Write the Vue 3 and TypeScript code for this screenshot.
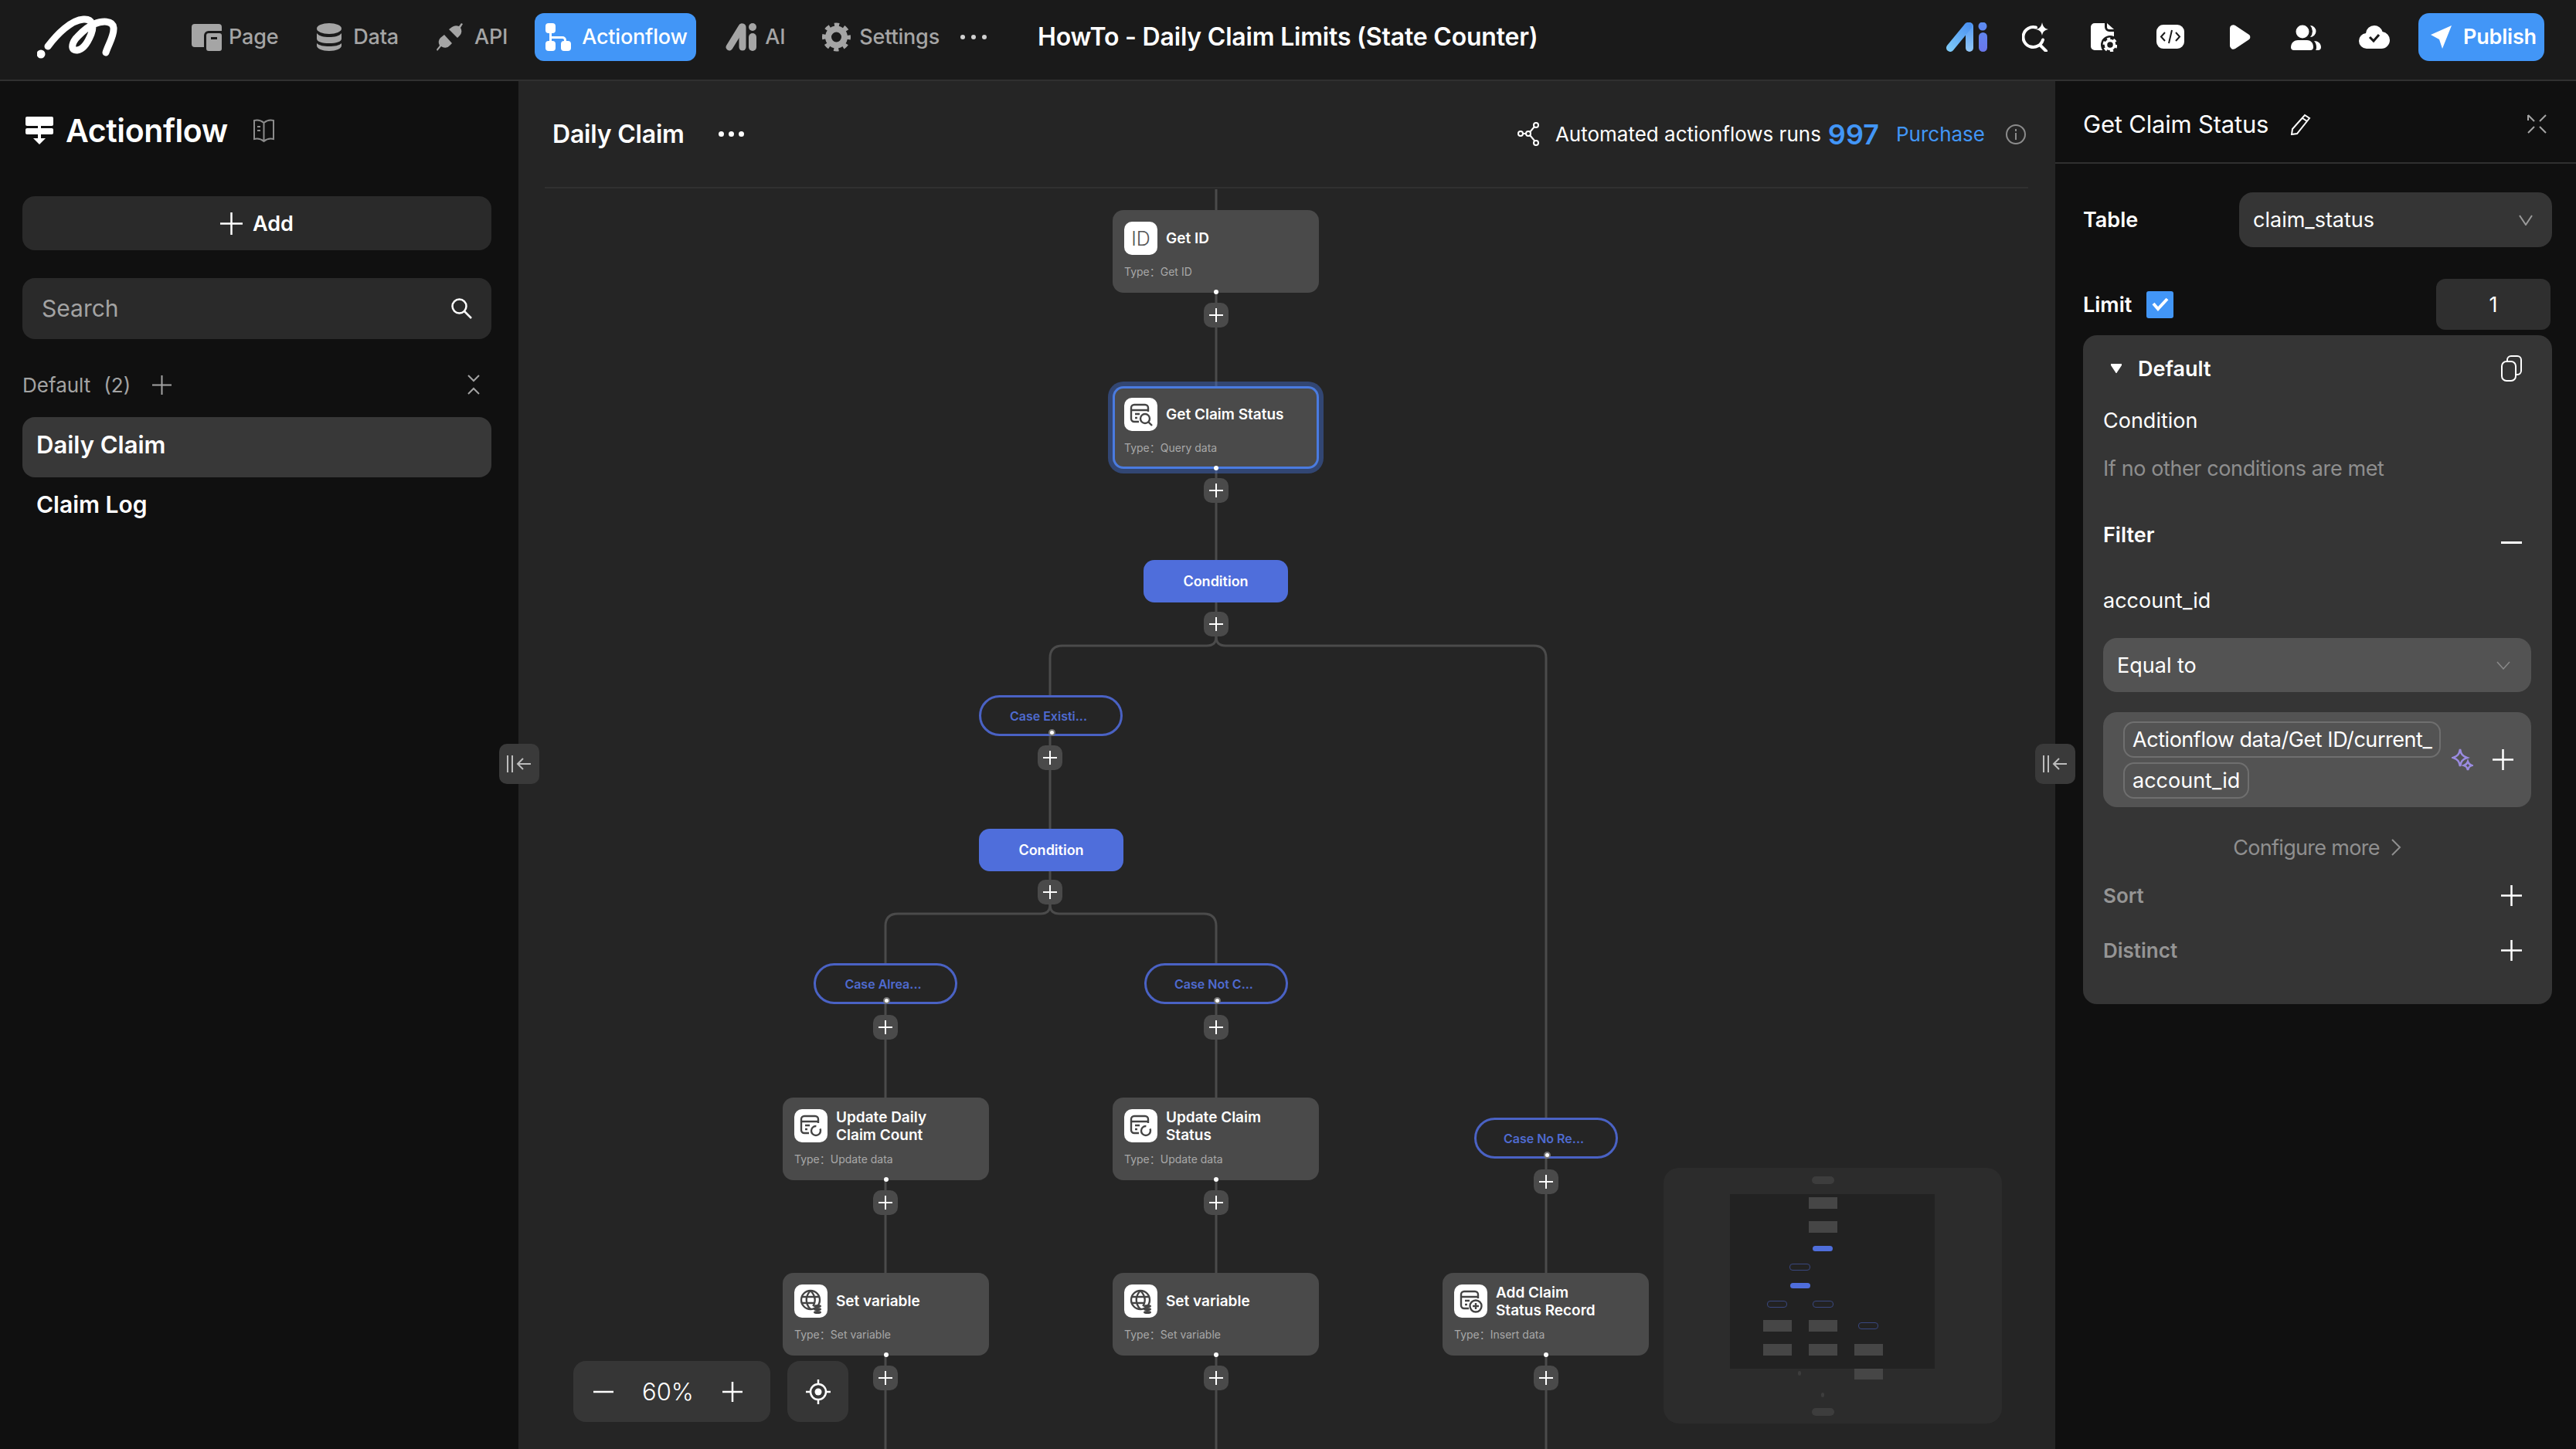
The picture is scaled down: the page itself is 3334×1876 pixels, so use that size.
<script setup lang="ts">
type IconKind = 'id' | 'query' | 'update' | 'globe' | 'add'

interface FlowNode {
  title: string[]
  type: string
  x: number
  y: number
  icon: IconKind
  active?: boolean
}

interface Box {
  x: number
  y: number
  w: number
  h: number
  kind?: string
}

// canvas origin in page pixels, nodes below are written in page pixels
const ox = 671
const oy = 105

const at = (x: number, y: number) => ({ left: `${x - ox}px`, top: `${y - oy}px` })
const box = (b: Box) => ({ ...at(b.x, b.y), width: `${b.w}px`, height: `${b.h}px` })

const nodes: FlowNode[] = [
  { title: ['Get ID'], type: 'Get ID', x: 1440, y: 272, icon: 'id' },
  { title: ['Get Claim Status'], type: 'Query data', x: 1440, y: 500, icon: 'query', active: true },
  { title: ['Update Daily', 'Claim Count'], type: 'Update data', x: 1013, y: 1421, icon: 'update' },
  { title: ['Update Claim', 'Status'], type: 'Update data', x: 1440, y: 1421, icon: 'update' },
  { title: ['Set variable'], type: 'Set variable', x: 1013, y: 1648, icon: 'globe' },
  { title: ['Set variable'], type: 'Set variable', x: 1440, y: 1648, icon: 'globe' },
  { title: ['Add Claim', 'Status Record'], type: 'Insert data', x: 1867, y: 1648, icon: 'add' }
]

const conditions = [
  { x: 1480, y: 725 },
  { x: 1267, y: 1073 }
]

const cases = [
  { label: 'Case Existi...', x: 1267, y: 900 },
  { label: 'Case Alrea...', x: 1053, y: 1247 },
  { label: 'Case Not C...', x: 1481, y: 1247 },
  { label: 'Case No Re...', x: 1908, y: 1447 }
]

const plusButtons = [
  { x: 1574, y: 408 },
  { x: 1574, y: 635 },
  { x: 1574, y: 808 },
  { x: 1359, y: 981 },
  { x: 1359, y: 1155 },
  { x: 1146, y: 1330 },
  { x: 1574, y: 1330 },
  { x: 2001, y: 1530 },
  { x: 1146, y: 1557 },
  { x: 1574, y: 1557 },
  { x: 1146, y: 1784 },
  { x: 1574, y: 1784 },
  { x: 2001, y: 1784 }
]

const miniBoxes: Box[] = [
  { x: 2345, y: 1523, w: 29, h: 10, kind: 'pill' },
  { x: 2341, y: 1550, w: 37, h: 15, kind: 'gray' },
  { x: 2341, y: 1581, w: 37, h: 15, kind: 'gray' },
  { x: 2346, y: 1613, w: 26, h: 7, kind: 'blue' },
  { x: 2316, y: 1636, w: 27, h: 9, kind: 'line' },
  { x: 2317, y: 1661, w: 26, h: 7, kind: 'blue' },
  { x: 2287, y: 1684, w: 26, h: 9, kind: 'line' },
  { x: 2346, y: 1684, w: 27, h: 9, kind: 'line' },
  { x: 2282, y: 1709, w: 37, h: 15, kind: 'gray' },
  { x: 2341, y: 1709, w: 37, h: 15, kind: 'gray' },
  { x: 2405, y: 1712, w: 26, h: 9, kind: 'line' },
  { x: 2282, y: 1740, w: 37, h: 15, kind: 'gray' },
  { x: 2341, y: 1740, w: 37, h: 15, kind: 'gray' },
  { x: 2400, y: 1740, w: 37, h: 15, kind: 'gray' },
  { x: 2400, y: 1772, w: 37, h: 14, kind: 'gray' },
  { x: 2327, y: 1775, w: 4, h: 6, kind: 'pill' },
  { x: 2357, y: 1803, w: 4, h: 6, kind: 'pill' },
  { x: 2345, y: 1823, w: 29, h: 10, kind: 'pill' }
]

const linesPath = [
  'M1574 245V824Q1574 836 1562 836H1375Q1359 836 1359 852V1171Q1359 1183 1347 1183H1162Q1146 1183 1146 1199V1876',
  'M1574 824Q1574 836 1586 836H1985Q2001 836 2001 852V1876',
  'M1359 1171Q1359 1183 1371 1183H1558Q1574 1183 1574 1199V1876'
]
</script>

<template>
  <div class="app">
    <header class="topbar">
      <svg class="logo" viewBox="0 0 104 56" fill="none" stroke="#fff" stroke-width="9" stroke-linecap="round" stroke-linejoin="round">
        <path d="M14 40C26 24 44 6 60 5C72 4 74 14 70 24C66 34 60 44 52 45C44 46 44 38 50 30C56 24 62 16 74 11C84 7 98 6 99 16C100 26 92 38 89 48" />
        <circle cx="5" cy="50" r="5.500" fill="#fff" stroke="none" />
      </svg>

      <nav class="nav">
        <a class="nav-item nav-page">
          <svg width="39" height="36" viewBox="0 0 39 36" fill="#a5a5a5"><path d="M4 1h31a4 4 0 0 1 4 4v5H22a6 6 0 0 0-6 6v15H4a4 4 0 0 1-4-4V5a4 4 0 0 1 4-4z" /><rect x="19" y="13" width="20" height="23" rx="3" /><rect x="25" y="18" width="8" height="3" fill="#1a1a1a" /></svg>
          <span>Page</span>
        </a>
        <a class="nav-item nav-data">
          <svg width="34" height="36" viewBox="0 0 34 36" fill="#a5a5a5"><ellipse cx="17" cy="7" rx="16" ry="7" /><path d="M1 13c3 4 9 5 16 5s13-1 16-5v7c0 4-7 6-16 6S1 24 1 20z" /><path d="M1 26c3 3 9 4 16 4s13-1 16-4v3c0 4-7 7-16 7S1 33 1 29z" /></svg>
          <span>Data</span>
        </a>
        <a class="nav-item nav-api">
          <svg width="34" height="36" viewBox="0 0 34 36" fill="#a5a5a5"><path d="M20 5a9 9 0 0 1 9-1l3-4 2 1-3 5a8 8 0 0 1-1 10l-3 3-11-11z" /><path d="M10 15l10 11-3 3a8 8 0 0 1-11 1l-5 6-1-2 4-5a8 8 0 0 1 1-10z" /></svg>
          <span>API</span>
        </a>
        <a class="nav-item nav-active">
          <svg width="33" height="36" viewBox="0 0 33 36" fill="#fff"><rect x="0" y="0" width="13" height="13" rx="4" /><rect x="0" y="23" width="13" height="13" rx="4" /><rect x="20" y="23" width="13" height="13" rx="4" /><path d="M5 12h3v5h14a5 5 0 0 1 5 5v2h-3v-2a2 2 0 0 0-2-2H8v4H5z" /></svg>
          <span>Actionflow</span>
        </a>
        <a class="nav-item nav-ai">
          <svg width="40" height="36" viewBox="0 0 40 36" fill="none" stroke="#a5a5a5"><path d="M5 31L21 5" stroke-width="9" stroke-linecap="round" /><path d="M22 5v26" stroke-width="9" stroke-linecap="round" /><circle cx="35" cy="5" r="5" fill="#a5a5a5" stroke="none" /><rect x="30" y="13" width="10" height="23" rx="5" fill="#a5a5a5" stroke="none" /></svg>
          <span>AI</span>
        </a>
        <a class="nav-item nav-settings">
          <svg width="37" height="38" viewBox="0 0 37 38" fill="none" stroke="#a5a5a5"><circle cx="18.500" cy="19" r="10.500" stroke-width="8" /><circle cx="18.500" cy="19" r="15.500" stroke-width="6" stroke-dasharray="6.100 6.070" stroke-dashoffset="3" /></svg>
          <span>Settings</span>
        </a>
        <span class="nav-dots"><i></i><i></i><i></i></span>
      </nav>

      <h1 class="project">HowTo - Daily Claim Limits (State Counter)</h1>

      <div class="top-actions">
        <svg width="54" height="38" viewBox="0 0 54 38" fill="none">
          <defs>
            <linearGradient id="aiSlant" gradientUnits="userSpaceOnUse" x1="4" y1="36" x2="32" y2="2"><stop offset="0" stop-color="#7fcbf8" /><stop offset="1" stop-color="#4a90f2" /></linearGradient>
            <linearGradient id="aiStem" gradientUnits="userSpaceOnUse" x1="31" y1="38" x2="31" y2="0"><stop offset="0" stop-color="#93c8f8" /><stop offset="1" stop-color="#4f97f4" /></linearGradient>
            <linearGradient id="aiDot" gradientUnits="userSpaceOnUse" x1="48" y1="38" x2="48" y2="0"><stop offset="0" stop-color="#6a76ea" /><stop offset="1" stop-color="#5c8cf0" /></linearGradient>
          </defs>
          <path d="M31 33V5" stroke="url(#aiStem)" stroke-width="10" stroke-linecap="round" />
          <path d="M6 33L29 5" stroke="url(#aiSlant)" stroke-width="10" stroke-linecap="round" />
          <circle cx="48" cy="5" r="5.500" fill="url(#aiDot)" />
          <rect x="43" y="13" width="11" height="25" rx="5.500" fill="url(#aiDot)" />
        </svg>
        <svg width="35" height="38" viewBox="0 0 35 38" fill="none" stroke="#fff" stroke-width="4" stroke-linecap="round"><path d="M18 6.500a13 13 0 1 0 9 16" /><path d="M24 30l7 7" /><path d="M26 0c1 5 3 8 8 9-5 1-7 3-8 8-1-5-3-7-8-8 5-1 7-4 8-9z" fill="#fff" stroke="none" /></svg>
        <svg width="35" height="38" viewBox="0 0 35 38" fill="#fff"><path d="M6 1h13v5a6 6 0 0 0 6 6h6v24H6a5 5 0 0 1-5-5V6a5 5 0 0 1 5-5z" /><path d="M22 1l9 8h-6a3 3 0 0 1-3-3z" /><circle cx="26" cy="29" r="12" fill="#1a1a1a" /><circle cx="26" cy="29" r="5.500" fill="none" stroke="#fff" stroke-width="3.500" /><circle cx="26" cy="29" r="8" fill="none" stroke="#fff" stroke-width="3" stroke-dasharray="4.200 4.180" /></svg>
        <svg width="36" height="32" viewBox="0 0 36 32"><rect width="36" height="31" rx="9" fill="#fff" /><path d="M11 10l-5 5.500 5 5.500M25 10l5 5.500-5 5.500M20 7l-4 17" fill="none" stroke="#1a1a1a" stroke-width="2" /></svg>
        <svg width="29" height="32" viewBox="0 0 29 32" fill="#fff"><path d="M1 5a4.500 4.500 0 0 1 7-4l18 12a4 4 0 0 1 0 6L8 31a4.500 4.500 0 0 1-7-4z" /></svg>
        <svg width="39" height="36" viewBox="0 0 39 36" fill="#fff"><circle cx="15" cy="11" r="8.500" /><path d="M0 31c0-6 5-9 9-9h12c4 0 8 3 8 9a4 4 0 0 1-4 4H4a4 4 0 0 1-4-4z" /><path d="M25 3a7 7 0 0 1 0 15 11 11 0 0 0 0-15zM30 23c5 0 9 3 9 8a4 4 0 0 1-4 4h-3c1-1 1-3 1-4 0-3-1-6-3-8z" /></svg>
        <svg width="40" height="32" viewBox="0 0 40 32"><path d="M20 1a11 11 0 0 1 10.500 8A11 11 0 0 1 40 20a11 11 0 0 1-11 11H10A10 10 0 0 1 0 21a10 10 0 0 1 9-10A11 11 0 0 1 20 1z" fill="#fff" /><path d="M14 16l5 5 7-8" fill="none" stroke="#1a1a1a" stroke-width="3" /></svg>
        <button class="publish">
          <svg width="27" height="30" viewBox="0 0 27 30" fill="#fff"><path d="M27 0L15 30l-4-12-11-6z" /></svg>
          Publish
        </button>
      </div>
    </header>

    <div class="body">
      <aside class="sidebar">
        <div class="side-title">
          <svg class="side-icon" width="36" height="36" viewBox="0 0 36 36" fill="#fff"><rect width="36" height="12" rx="2" /><rect y="15" width="36" height="8" rx="2" /><path d="M16 12h4v4h-4zM16 23h4v5h6l-8 8-8-8h6z" /></svg>
          <h2>Actionflow</h2>
          <svg class="book" width="27" height="31" viewBox="0 0 27 31" fill="none" stroke="#8c8c8c" stroke-width="2"><path d="M13.500 5C10 2 5 1 1 2v24c4-1 9 0 12.500 3 3.500-3 8.500-4 12.500-3V2c-4-1-9 0-12.500 3zM13.500 5v24M5 10h4M5 15h4" /></svg>
        </div>
        <button class="side-add">
          <svg width="29" height="29" viewBox="0 0 29 29" stroke="#fff" stroke-width="2.500"><path d="M14.500 0v29M0 14.500h29" /></svg>
          Add
        </button>
        <div class="side-search">
          <span>Search</span>
          <svg width="28" height="28" viewBox="0 0 28 28" fill="none" stroke="#fff" stroke-width="2.500"><circle cx="11.500" cy="11.500" r="9" /><path d="M18 18l9 9" /></svg>
        </div>
        <div class="side-group">
          <span>Default</span>
          <span class="group-count">(2)</span>
          <svg class="group-plus" width="25" height="25" viewBox="0 0 25 25" stroke="#a3a3a3" stroke-width="2"><path d="M12.500 0v25M0 12.500h25" /></svg>
          <svg class="group-collapse" width="16" height="26" viewBox="0 0 16 26" fill="none" stroke="#a3a3a3" stroke-width="2"><path d="M1 1l7 7 7-7M1 25l7-7 7 7" /></svg>
        </div>
        <div class="side-row side-row-active">Daily Claim</div>
        <div class="side-row">Claim Log</div>
      </aside>

      <main class="canvas">
        <div class="canvas-head">
          <span class="flow-name">Daily Claim</span>
          <span class="flow-dots"><i></i><i></i><i></i></span>
          <svg class="share" width="29" height="31" viewBox="0 0 29 31" fill="none" stroke="#fff" stroke-width="2"><circle cx="4" cy="15" r="3" /><circle cx="24" cy="4" r="3" /><circle cx="24" cy="27" r="3" /><circle cx="14" cy="15" r="3" /><path d="M7 15h4M16 13l6-7M16 17l6 7" /></svg>
          <span class="runs">Automated actionflows runs</span>
          <span class="runs-num">997</span>
          <span class="purchase">Purchase</span>
          <svg width="26" height="26" viewBox="0 0 26 26" fill="none" stroke="#8c8c8c" stroke-width="2"><circle cx="13" cy="13" r="12" /><path d="M13 11v9M13 6v3" /></svg>
        </div>

        <svg class="lines" width="1989" height="1771" :viewBox="`${ox} ${oy} 1989 1771`" fill="none" stroke="#4b4b4b" stroke-width="3">
          <path v-for="d in linesPath" :key="d" :d="d" />
        </svg>

        <div
          v-for="n in nodes"
          :key="n.title.join() + n.x"
          class="node"
          :class="{ 'node-active': n.active }"
          :style="at(n.x, n.y)"
        >
          <div class="node-top">
            <div class="node-icon">
              <span v-if="n.icon === 'id'" class="id-glyph">ID</span>
              <svg v-else width="32" height="32" viewBox="0 0 32 32" fill="none" stroke="#444" stroke-width="2.400">
                <template v-if="n.icon === 'globe'">
                  <circle cx="15" cy="14" r="12" />
                  <path d="M3 10h24M3 18h18M15 2c-7 7-7 17 0 24M15 2c7 7 7 15 3 20" />
                  <ellipse cx="24" cy="22" rx="5" ry="2" fill="#444" stroke="none" />
                  <ellipse cx="24" cy="26" rx="5" ry="2" fill="#444" stroke="none" />
                  <ellipse cx="24" cy="30" rx="5" ry="2" fill="#444" stroke="none" />
                </template>
                <template v-else>
                  <path d="M13 25H7a4 4 0 0 1-4-4V7a4 4 0 0 1 4-4h14a4 4 0 0 1 4 4v5" />
                  <path d="M3 10h22M8 15h6M8 20h3" />
                  <template v-if="n.icon === 'query'">
                    <circle cx="21" cy="21" r="6" />
                    <path d="M25 25l5 5" />
                  </template>
                  <template v-else-if="n.icon === 'update'">
                    <circle cx="22" cy="22" r="6" stroke-dasharray="28 6" />
                  </template>
                  <template v-else>
                    <circle cx="22" cy="22" r="7.500" />
                    <path d="M22 18v8M18 22h8" />
                  </template>
                </template>
              </svg>
            </div>
            <div class="node-title">
              <div v-for="line in n.title" :key="line">{{ line }}</div>
            </div>
          </div>
          <div class="node-type">Type：{{ n.type }}</div>
          <i class="node-dot"></i>
        </div>

        <div v-for="c in conditions" :key="c.y" class="cond" :style="at(c.x, c.y)">Condition</div>

        <div v-for="c in cases" :key="c.label" class="case" :style="at(c.x, c.y)">
          {{ c.label }}
          <i class="case-dot"></i>
        </div>

        <div v-for="p in plusButtons" :key="`${p.x}-${p.y}`" class="plus" :style="at(p.x - 16, p.y - 16)">
          <svg width="18" height="18" viewBox="0 0 18 18" stroke="#fff" stroke-width="2"><path d="M9 0v18M0 9h18" /></svg>
        </div>

        <div class="zoom-tools">
          <div class="zoom-box">
            <svg width="26" height="26" viewBox="0 0 26 26" stroke="#fff" stroke-width="2.500"><path d="M0 13h26" /></svg>
            <span>60%</span>
            <svg width="26" height="26" viewBox="0 0 26 26" stroke="#fff" stroke-width="2.500"><path d="M13 0v26M0 13h26" /></svg>
          </div>
          <div class="zoom-target">
            <svg width="32" height="32" viewBox="0 0 32 32" fill="none" stroke="#fff" stroke-width="2.500"><circle cx="16" cy="16" r="10" /><circle cx="16" cy="16" r="4.500" fill="#fff" stroke="none" /><path d="M16 0v6M16 26v6M0 16h6M26 16h6" /></svg>
          </div>
        </div>

        <div class="minimap">
          <div class="mini-view"></div>
        </div>
        <div v-for="(b, i) in miniBoxes" :key="i" class="mini-box" :class="`mini-${b.kind}`" :style="box(b)"></div>
      </main>

      <aside class="panel">
        <div class="panel-head">
          <span>Get Claim Status</span>
          <svg class="pencil" width="27" height="28" viewBox="0 0 27 28" fill="none" stroke="#fff" stroke-width="2"><path d="M19 2l6 4L9 26l-7 1 1-7zM16 6l6 4" /></svg>
          <svg class="expand" width="25" height="25" viewBox="0 0 25 25" fill="none" stroke="#a5a5a5" stroke-width="2"><path d="M1 8V1M1 1l8 8M24 1l-8 8M1 24l8-8M24 24l-8-8" /></svg>
        </div>

        <div class="panel-body">
          <div class="table-row">
            <span class="label">Table</span>
            <div class="select table-select">
              <span>claim_status</span>
              <svg width="18" height="14" viewBox="0 0 18 14" fill="none" stroke="#9a9a9a" stroke-width="2"><path d="M1 1l8 12 8-12" /></svg>
            </div>
          </div>

          <div class="limit-row">
            <span class="label">Limit</span>
            <span class="checkbox">
              <svg width="24" height="20" viewBox="0 0 24 20" fill="none" stroke="#fff" stroke-width="4"><path d="M3 9l6 7L21 3" /></svg>
            </span>
            <div class="limit-input">1</div>
          </div>

          <section class="cond-card">
            <div class="card-head">
              <svg width="14" height="12" viewBox="0 0 14 12" fill="#fff"><path d="M1 0h12a1 1 0 0 1 1 2L8 11a1 1 0 0 1-2 0L0 2a1 1 0 0 1 1-2z" /></svg>
              <span class="label">Default</span>
              <svg class="copy" width="27" height="34" viewBox="0 0 27 34" fill="none" stroke="#fff" stroke-width="2"><rect x="1" y="8" width="18" height="25" rx="6" /><path d="M8 8V6a5 5 0 0 1 5-5h8a5 5 0 0 1 5 5v14a5 5 0 0 1-5 5h-2" /></svg>
            </div>
            <div class="cond-label">Condition</div>
            <div class="cond-hint">If no other conditions are met</div>
            <div class="filter-row">
              <span class="label">Filter</span>
              <i class="minus"></i>
            </div>
            <div class="field-name">account_id</div>
            <div class="select equal-select">
              <span>Equal to</span>
              <svg width="18" height="11" viewBox="0 0 18 11" fill="none" stroke="#8a8a8a" stroke-width="1.500"><path d="M1 1l8 9 8-9" /></svg>
            </div>
            <div class="value-box">
              <div class="chips">
                <span class="chip chip-long">Actionflow data/Get ID/current_</span>
                <span class="chip">account_id</span>
              </div>
              <svg class="spark" width="28" height="31" viewBox="0 0 28 31" fill="none" stroke="#9a8be0" stroke-width="2.500"><path d="M11 2c1 6 3 9 9 11-6 2-8 5-9 11-1-6-3-9-9-11 6-2 8-5 9-11z" /><path d="M21 18c1 3 2 4 5 5-3 1-4 2-5 6-1-4-2-5-5-6 3-1 4-2 5-5z" /></svg>
              <svg class="value-plus" width="27" height="27" viewBox="0 0 27 27" stroke="#fff" stroke-width="2.500"><path d="M13.500 0v27M0 13.500h27" /></svg>
            </div>
            <div class="configure">
              <span>Configure more</span>
              <svg width="13" height="22" viewBox="0 0 13 22" fill="none" stroke="#8f8f8f" stroke-width="2"><path d="M1 1l10 10L1 21" /></svg>
            </div>
            <div class="extra-row sort-row">
              <span>Sort</span>
              <svg width="27" height="27" viewBox="0 0 27 27" stroke="#fff" stroke-width="2.500"><path d="M13.500 0v27M0 13.500h27" /></svg>
            </div>
            <div class="extra-row distinct-row">
              <span>Distinct</span>
              <svg width="27" height="27" viewBox="0 0 27 27" stroke="#fff" stroke-width="2.500"><path d="M13.500 0v27M0 13.500h27" /></svg>
            </div>
          </section>
        </div>
      </aside>
    </div>

    <div class="collapse collapse-left">
      <svg width="34" height="24" viewBox="0 0 34 24" fill="none" stroke="#bdbdbd" stroke-width="2"><path d="M2 1v22M8 1v22M32 12H15M22 5l-7 7 7 7" /></svg>
    </div>
    <div class="collapse collapse-right">
      <svg width="34" height="24" viewBox="0 0 34 24" fill="none" stroke="#bdbdbd" stroke-width="2"><path d="M2 1v22M8 1v22M32 12H15M22 5l-7 7 7 7" /></svg>
    </div>
  </div>
</template>

<style>
html,
body {
  margin: 0;
  background: #252525;
  overflow: hidden;
}
</style>

<style scoped>
.app {
  position: relative;
  width: 3334px;
  height: 1876px;
  display: flex;
  flex-direction: column;
  overflow: hidden;
  color: #fff;
  font-family: Inter, "Noto Sans", "Noto Sans CJK SC", sans-serif;
}

h1,
h2 {
  margin: 0;
}

button {
  border: none;
  color: inherit;
  font-family: inherit;
}

/* top bar */
.topbar {
  height: 105px;
  flex: none;
  box-sizing: border-box;
  padding-bottom: 8px;
  display: flex;
  align-items: center;
  background: #1a1a1a;
  border-bottom: 2px solid #303030;
}

.logo {
  width: 104px;
  height: 56px;
  margin-left: 48px;
}

.nav {
  display: flex;
  align-items: center;
  margin-left: 96px;
}

.nav-item {
  display: flex;
  align-items: center;
  gap: 9px;
  color: #a5a5a5;
  font-size: 27px;
  font-weight: 500;
  letter-spacing: -0.2px;
}

.nav-data {
  margin-left: 49px;
  gap: 14px;
}

.nav-api {
  margin-left: 49px;
  gap: 15px;
}

.nav-active {
  width: 209px;
  height: 62px;
  box-sizing: border-box;
  margin-left: 35px;
  padding-left: 14px;
  gap: 14px;
  color: #fff;
  background: #4296f7;
  border-radius: 12px;
}

.nav-ai {
  margin-left: 38px;
  gap: 11px;
}

.nav-settings {
  margin-left: 48px;
  gap: 11px;
}

.nav-dots,
.flow-dots {
  display: flex;
  gap: 8px;
  margin-left: 27px;
}

.nav-dots i,
.flow-dots i {
  width: 6px;
  height: 6px;
  border-radius: 50%;
  background: #d0d0d0;
}

.project {
  margin-left: 66px;
  font-size: 32px;
  font-weight: 600;
  letter-spacing: -0.2px;
}

.top-actions {
  margin-left: auto;
  padding-right: 41px;
  display: flex;
  align-items: center;
}

.top-actions > svg:nth-child(2) {
  margin-left: 45px;
}

.top-actions > svg:nth-child(3) {
  margin-left: 53px;
}

.top-actions > svg:nth-child(4) {
  margin-left: 51px;
}

.top-actions > svg:nth-child(5) {
  margin-left: 58px;
}

.top-actions > svg:nth-child(6) {
  margin-left: 51px;
}

.top-actions > svg:nth-child(7) {
  margin-left: 49px;
}

.publish {
  width: 163px;
  height: 62px;
  margin-left: 37px;
  display: flex;
  align-items: center;
  gap: 15px;
  padding: 0 0 0 16px;
  background: #4296f7;
  border-radius: 14px;
  font-size: 27px;
  font-weight: 600;
  letter-spacing: -0.2px;
}

.body {
  flex: 1;
  display: flex;
  min-height: 0;
}

/* left sidebar */
.sidebar {
  width: 671px;
  flex: none;
  box-sizing: border-box;
  padding: 0 35px 0 29px;
  background: #101010;
}

.side-title {
  height: 128px;
  display: flex;
  align-items: center;
  padding: 0 0 0 4px;
}

.side-title h2 {
  margin-left: 16px;
  font-size: 41px;
  font-weight: 600;
  letter-spacing: -0.4px;
}

.book {
  margin-left: 33px;
}

.side-add {
  width: 100%;
  height: 70px;
  margin-top: 21px;
  display: flex;
  align-items: center;
  justify-content: center;
  gap: 13px;
  background: #2a2a2a;
  border-radius: 16px;
  font-size: 27px;
  font-weight: 600;
}

.side-search {
  height: 79px;
  margin-top: 36px;
  display: flex;
  align-items: center;
  justify-content: space-between;
  padding: 0 25px 2px 25px;
  box-sizing: border-box;
  background: #2a2a2a;
  border-radius: 16px;
  color: #a3a3a3;
  font-size: 30px;
}

.side-group {
  height: 60px;
  margin-top: 29px;
  display: flex;
  align-items: center;
  color: #a3a3a3;
  font-size: 26px;
}

.group-count {
  margin-left: 17px;
}

.group-plus {
  margin-left: 28px;
}

.group-collapse {
  margin-left: auto;
  margin-right: 15px;
}

.side-row {
  height: 70px;
  display: flex;
  align-items: center;
  padding: 0 18px;
  font-size: 30px;
  font-weight: 600;
  border-radius: 16px;
}

.side-row-active {
  height: 78px;
  margin-top: 12px;
  background: #383838;
  padding-bottom: 8px;
  box-sizing: border-box;
  font-size: 31px;
}

/* canvas */
.canvas {
  position: relative;
  flex: 1;
  min-width: 0;
  background: #252525;
  overflow: hidden;
}

.canvas-head {
  position: relative;
  z-index: 2;
  height: 137px;
  margin: 0 35px 0 34px;
  padding: 0 3px 0 10px;
  display: flex;
  align-items: center;
  border-bottom: 2px solid #303030;
}

.flow-name {
  font-size: 32px;
  font-weight: 600;
  letter-spacing: -0.2px;
}

.flow-dots {
  margin-left: 44px;
  gap: 6px;
}

.flow-dots i {
  width: 7px;
  height: 7px;
  background: #fff;
}

.share {
  margin-left: auto;
}

.runs {
  margin-left: 20px;
  font-size: 26px;
}

.runs-num {
  margin-left: 9px;
  color: #4296f7;
  font-size: 36px;
  font-weight: 600;
}

.purchase {
  margin-left: 22px;
  margin-right: 27px;
  color: #4296f7;
  font-size: 26px;
}

.lines {
  position: absolute;
  left: 0;
  top: 0;
}

.node {
  position: absolute;
  width: 267px;
  height: 107px;
  box-sizing: border-box;
  padding: 15px;
  background: #4a4a4a;
  border-radius: 14px;
}

.node-active {
  box-shadow: inset 0 0 0 3px #4a7be0, 0 0 0 6px rgba(66, 110, 210, 0.45);
}

.node-top {
  display: flex;
  align-items: center;
  gap: 11px;
  height: 43px;
}

.node-icon {
  width: 43px;
  height: 43px;
  flex: none;
  display: flex;
  align-items: center;
  justify-content: center;
  background: #fff;
  border-radius: 10px;
}

.id-glyph {
  color: #555;
  font-size: 25px;
  font-weight: 300;
}

.node-title {
  font-size: 19px;
  font-weight: 600;
  line-height: 23px;
  white-space: nowrap;
}

.node-type {
  margin-top: 13px;
  color: #a8a8a8;
  font-size: 14px;
  line-height: 17px;
}

.node-dot,
.case-dot {
  position: absolute;
  left: 50%;
  bottom: -2px;
  width: 6px;
  height: 6px;
  margin-left: -3px;
  border-radius: 50%;
  background: #fff;
}

.case-dot {
  width: 5px;
  height: 5px;
  bottom: -3px;
  border: 2px solid #777;
}

.cond {
  position: absolute;
  width: 187px;
  height: 55px;
  display: flex;
  align-items: center;
  justify-content: center;
  background: #4f6edb;
  border-radius: 14px;
  font-size: 18px;
  font-weight: 600;
}

.case {
  position: absolute;
  width: 186px;
  height: 53px;
  box-sizing: border-box;
  display: flex;
  align-items: center;
  justify-content: center;
  padding-right: 6px;
  background: #252525;
  border: 3px solid #4a62c4;
  border-radius: 27px;
  color: #4f6bd0;
  font-size: 16px;
  font-weight: 600;
}

.plus {
  position: absolute;
  width: 32px;
  height: 32px;
  display: flex;
  align-items: center;
  justify-content: center;
  background: #4a4a4a;
  border-radius: 10px;
}

.zoom-tools {
  position: absolute;
  left: 71px;
  top: 1657px;
  display: flex;
  gap: 22px;
}

.zoom-box {
  width: 255px;
  height: 79px;
  box-sizing: border-box;
  padding: 0 36px 0 26px;
  display: flex;
  align-items: center;
  justify-content: space-between;
  background: #363636;
  border-radius: 16px;
  font-size: 31px;
  font-weight: 300;
}

.zoom-target {
  width: 79px;
  height: 79px;
  display: flex;
  align-items: center;
  justify-content: center;
  background: #363636;
  border-radius: 16px;
}

.minimap {
  position: absolute;
  left: 1482px;
  top: 1407px;
  width: 438px;
  height: 331px;
  box-sizing: border-box;
  padding: 34px 87px 71px 86px;
  background: #2c2c2c;
  border-radius: 20px;
}

.mini-view {
  width: 100%;
  height: 100%;
  background: #222;
}

.mini-box {
  position: absolute;
  box-sizing: border-box;
}

.mini-pill {
  background: #3d3d3d;
  border-radius: 5px;
}

.mini-gray {
  background: #464646;
}

.mini-blue {
  background: #4f6edb;
  border-radius: 4px;
}

.mini-line {
  border: 1.500px solid #39477f;
  border-radius: 4px;
}

/* right panel */
.panel {
  width: 674px;
  flex: none;
  background: #101010;
}

.panel-head {
  height: 107px;
  box-sizing: border-box;
  display: flex;
  align-items: center;
  padding: 6px 38px 0 36px;
  border-bottom: 2px solid #303030;
  font-size: 31px;
  letter-spacing: -0.2px;
}

.pencil {
  margin-left: 28px;
}

.expand {
  margin-left: auto;
}

.panel-body {
  padding: 37px 31px 0 36px;
}

.label {
  font-size: 27px;
  font-weight: 600;
}

.table-row {
  display: flex;
  align-items: center;
  justify-content: space-between;
}

.select {
  display: flex;
  align-items: center;
  justify-content: space-between;
  font-size: 27px;
}

.table-select {
  width: 405px;
  height: 71px;
  box-sizing: border-box;
  padding: 0 25px 0 18px;
  background: #353535;
  border-radius: 18px;
}

.limit-row {
  height: 66px;
  margin-top: 41px;
  display: flex;
  align-items: center;
}

.checkbox {
  width: 35px;
  height: 35px;
  margin-left: 19px;
  display: flex;
  align-items: center;
  justify-content: center;
  background: #4296f7;
  border-radius: 3px;
}

.limit-input {
  width: 148px;
  height: 66px;
  margin-left: auto;
  margin-right: 2px;
  display: flex;
  align-items: center;
  justify-content: center;
  background: #2f2f2f;
  border-radius: 12px;
  font-size: 27px;
}

.cond-card {
  margin-top: 7px;
  height: 866px;
  box-sizing: border-box;
  padding: 13px 27px 0 26px;
  background: #353535;
  border-radius: 18px;
}

.card-head {
  height: 60px;
  display: flex;
  align-items: center;
  padding-left: 10px;
  gap: 21px;
}

.copy {
  margin-left: auto;
  margin-right: 12px;
}

.cond-label {
  height: 74px;
  display: flex;
  align-items: center;
  font-size: 27px;
}

.cond-hint {
  height: 50px;
  display: flex;
  align-items: center;
  color: #8e8e8e;
  font-size: 27px;
  letter-spacing: -0.4px;
}

.filter-row {
  height: 122px;
  display: flex;
  align-items: center;
  justify-content: space-between;
}

.minus {
  width: 27px;
  height: 3px;
  margin: 20px 12px 0 0;
  background: #fff;
}

.field-name {
  height: 48px;
  display: flex;
  align-items: center;
  font-size: 27px;
}

.equal-select {
  height: 70px;
  margin-top: 25px;
  padding: 0 27px 0 18px;
  background: #535353;
  border-radius: 18px;
}

.value-box {
  height: 123px;
  box-sizing: border-box;
  margin-top: 26px;
  display: flex;
  align-items: center;
  padding: 0 23px 0 26px;
  background: #535353;
  border-radius: 18px;
}

.chips {
  width: 412px;
  display: flex;
  flex-direction: column;
  align-items: flex-start;
  gap: 6px;
}

.chip {
  height: 47px;
  box-sizing: border-box;
  display: flex;
  align-items: center;
  padding: 0 10px;
  border: 2px solid #6f6f6f;
  border-radius: 14px;
  font-size: 27px;
  white-space: nowrap;
}

.chip-long {
  letter-spacing: -0.45px;
}

.spark {
  margin-left: 13px;
}

.value-plus {
  margin-left: auto;
}

.configure {
  height: 90px;
  margin-top: 7px;
  display: flex;
  align-items: center;
  justify-content: center;
  gap: 15px;
  color: #8f8f8f;
  font-size: 27px;
  letter-spacing: -0.7px;
}

.extra-row {
  height: 34px;
  display: flex;
  align-items: center;
  justify-content: space-between;
  padding-right: 12px;
  color: #959595;
  font-size: 26px;
  font-weight: 600;
}

.distinct-row {
  margin-top: 37px;
}

.collapse {
  position: absolute;
  top: 963px;
  width: 52px;
  height: 52px;
  display: flex;
  align-items: center;
  justify-content: center;
  background: #3a3a3a;
  border-radius: 10px;
}

.collapse-left {
  left: 646px;
}

.collapse-right {
  left: 2634px;
}
</style>
